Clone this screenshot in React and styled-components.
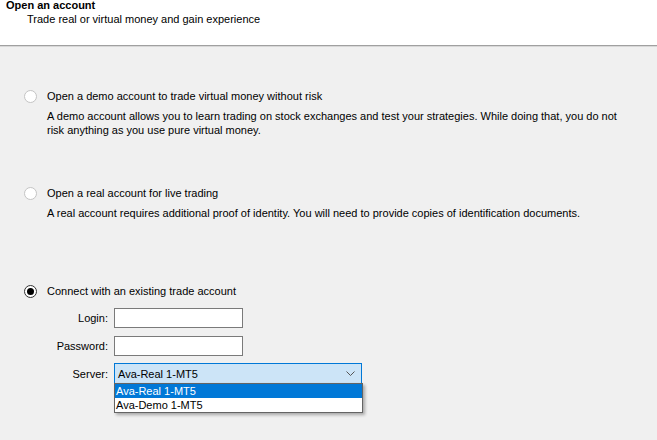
import React from "react";
import styled, { createGlobalStyle } from "styled-components";

const GlobalStyle = createGlobalStyle`
  html, body {
    margin: 0;
    padding: 0;
    background: #f0f0f0;
  }
  body {
    font-family: "Liberation Sans", Arial, sans-serif;
    font-size: 11px;
    color: #000;
  }
`;

const Page = styled.div`
  width: 657px;
  height: 440px;
  overflow: hidden;
  background: #f0f0f0;
`;

const Header = styled.div`
  height: 47px;
  background: #fff;
  border-bottom: 1px solid #a0a0a0;
  box-shadow: 0 1px 0 #d8d8d8;
  box-sizing: border-box;
`;

const Title = styled.div`
  font-weight: bold;
  padding-left: 6px;
  line-height: 12px;
  margin-top: -1px;
`;

const Subtitle = styled.div`
  padding-left: 27px;
  line-height: 14px;
  margin-top: 1px;
`;

const Body = styled.div`
  padding: 42px 0 0 24px;
  position: relative;
`;

const Option = styled.div`
  margin-top: ${(p) => p.$gap || 0}px;
`;

const RadioRow = styled.label`
  display: flex;
  align-items: center;
  height: 16px;
  gap: 10px;
`;

const Radio = styled.span`
  width: 13px;
  height: 13px;
  box-sizing: border-box;
  border-radius: 50%;
  border: 1px solid ${(p) => (p.$checked ? "#333" : "#c4c4c4")};
  background: #fff;
  display: flex;
  align-items: center;
  justify-content: center;
  &::after {
    content: "";
    width: 7px;
    height: 7px;
    border-radius: 50%;
    background: ${(p) => (p.$checked ? "#000" : "transparent")};
  }
`;

const Desc = styled.p`
  margin: 5px 0 0 23px;
  line-height: 14px;
  width: 590px;
`;

const Form = styled.div`
  display: grid;
  grid-template-columns: 84px auto;
  column-gap: 6px;
  row-gap: 8px;
  margin-top: 9px;
  align-items: center;
  justify-items: start;
`;

const Label = styled.span`
  justify-self: end;
`;

const TextBox = styled.div`
  width: 129px;
  height: 20px;
  box-sizing: border-box;
  border: 1px solid #7a7a7a;
  background: #fff;
`;

const SelectWrap = styled.div`
  position: relative;
  margin-top: -1px;
`;

const Select = styled.div`
  width: 248px;
  height: 21px;
  box-sizing: border-box;
  border: 1px solid #0078d7;
  background: #cce4f7;
  display: flex;
  align-items: center;
  justify-content: space-between;
  padding: 0 6px 0 3px;
`;

const DropList = styled.div`
  position: absolute;
  left: 0;
  top: 20px;
  width: 249px;
  box-sizing: border-box;
  border: 1px solid #646464;
  background: #fff;
  box-shadow: 2px 2px 3px rgba(0, 0, 0, 0.3);
  z-index: 2;
`;

const Item = styled.div`
  height: 14px;
  line-height: 14px;
  padding-left: 1px;
  background: ${(p) => (p.$active ? "#0078d7" : "#fff")};
  color: ${(p) => (p.$active ? "#fff" : "#000")};
`;

const Chevron = () => (
  <svg width="9" height="6" viewBox="0 0 9 6">
    <path d="M0.5 0.5 L4.5 4.5 L8.5 0.5" fill="none" stroke="#555" strokeWidth="1" />
  </svg>
);

export default function App() {
  return (
    <Page>
      <GlobalStyle />
      <Header>
        <Title>Open an account</Title>
        <Subtitle>Trade real or virtual money and gain experience</Subtitle>
      </Header>
      <Body>
        <Option>
          <RadioRow>
            <Radio />
            Open a demo account to trade virtual money without risk
          </RadioRow>
          <Desc>
            A demo account allows you to learn trading on stock exchanges and test your
            strategies. While doing that, you do not risk anything as you use pure virtual
            money.
          </Desc>
        </Option>
        <Option $gap={48}>
          <RadioRow>
            <Radio />
            Open a real account for live trading
          </RadioRow>
          <Desc>
            A real account requires additional proof of identity. You will need to provide
            copies of identification documents.
          </Desc>
        </Option>
        <Option $gap={63}>
          <RadioRow>
            <Radio $checked />
            Connect with an existing trade account
          </RadioRow>
          <Form>
            <Label>Login:</Label>
            <TextBox />
            <Label>Password:</Label>
            <TextBox />
            <Label>Server:</Label>
            <SelectWrap>
              <Select>
                <span>Ava-Real 1-MT5</span>
                <Chevron />
              </Select>
              <DropList>
                <Item $active>Ava-Real 1-MT5</Item>
                <Item>Ava-Demo 1-MT5</Item>
              </DropList>
            </SelectWrap>
          </Form>
        </Option>
      </Body>
    </Page>
  );
}
